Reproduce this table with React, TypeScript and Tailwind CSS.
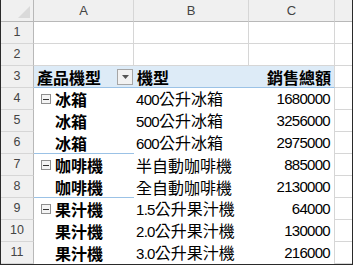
import React from "react";

const CJK = { fontFamily: '"Noto Sans CJK TC", "Noto Sans CJK SC", sans-serif' };
const NUM = { fontFamily: '"Liberation Sans", Arial, sans-serif' };

function Num({ children }: { children: React.ReactNode }) {
  return (
    <span className="text-[15px] tracking-[-0.7px]" style={NUM}>
      {children}
    </span>
  );
}

function MinusBox() {
  return (
    <span className="mr-[4px] inline-flex h-[10px] w-[10px] shrink-0 items-center justify-center border border-[#8f8f8f] bg-[#f4f4f4]">
      <span className="h-[1px] w-[6px] bg-[#333]" />
    </span>
  );
}

type R = {
  n: number;
  icon?: boolean;
  a: string;
  bNum: string;
  bText: string;
  c: string;
  sep?: boolean;
};

const data: R[] = [
  { n: 4, icon: true, a: "冰箱", bNum: "400", bText: "公升冰箱", c: "1680000" },
  { n: 5, a: "冰箱", bNum: "500", bText: "公升冰箱", c: "3256000" },
  { n: 6, a: "冰箱", bNum: "600", bText: "公升冰箱", c: "2975000", sep: true },
  { n: 7, icon: true, a: "咖啡機", bNum: "", bText: "半自動咖啡機", c: "885000" },
  { n: 8, a: "咖啡機", bNum: "", bText: "全自動咖啡機", c: "2130000", sep: true },
  { n: 9, icon: true, a: "果汁機", bNum: "1.5", bText: "公升果汁機", c: "64000" },
  { n: 10, a: "果汁機", bNum: "2.0", bText: "公升果汁機", c: "130000" },
  { n: 11, a: "果汁機", bNum: "3.0", bText: "公升果汁機", c: "216000" },
];

function RowNum({ n }: { n: number }) {
  return (
    <div
      className="flex h-full w-[33px] shrink-0 items-center justify-center border-r border-b border-r-[#b8b8b8] border-b-[#d6d6d6] bg-[#f0f0f0] text-[12.5px] leading-none text-[#444]"
      style={NUM}
    >
      {n}
    </div>
  );
}

export default function App() {
  return (
    <div className="flex h-[265px] w-[353px] flex-col overflow-hidden border-x border-b border-[#2a2a2a] bg-white text-black">
      {/* column headers */}
      <div className="flex h-[22px] shrink-0 text-[13px] leading-none text-[#444]" style={NUM}>
        <div className="relative h-full w-[33px] shrink-0 border-r border-b border-[#b8b8b8] bg-[#f0f0f0]">
          <svg className="absolute right-[3px] bottom-[3px]" width="12" height="12" viewBox="0 0 12 12">
            <polygon points="12,0 12,12 0,12" fill="#dadada" />
          </svg>
        </div>
        <div className="flex h-full w-[100px] shrink-0 items-center justify-center border-r border-b border-r-[#d6d6d6] border-b-[#b8b8b8] bg-[#f0f0f0]">A</div>
        <div className="flex h-full w-[115px] shrink-0 items-center justify-center border-r border-b border-r-[#d6d6d6] border-b-[#b8b8b8] bg-[#f0f0f0]">B</div>
        <div className="flex h-full w-[86px] shrink-0 items-center justify-center border-r border-b border-r-[#d6d6d6] border-b-[#b8b8b8] bg-[#f0f0f0]">C</div>
        <div className="h-full flex-1 border-b border-[#b8b8b8] bg-[#f0f0f0]" />
      </div>

      {/* rows 1, 2 */}
      {[1, 2].map((n) => (
        <div key={n} className="flex h-[22px] shrink-0">
          <RowNum n={n} />
          <div className="h-full w-[100px] shrink-0 border-r border-b border-[#d6d6d6]" />
          <div className="h-full w-[115px] shrink-0 border-r border-b border-[#d6d6d6]" />
          <div className="h-full w-[86px] shrink-0 border-r border-b border-[#d6d6d6]" />
          <div className="h-full flex-1 border-b border-[#d6d6d6]" />
        </div>
      ))}

      {/* row 3 pivot header */}
      <div className="flex h-[22px] shrink-0">
        <RowNum n={3} />
        <div className="flex h-full w-[100px] shrink-0 items-center justify-between border-b border-[#9bc2e6] bg-[#ddebf7] pr-[1px] pl-[3px] text-[16px] leading-[18px] font-bold" style={CJK}>
          <span>產品機型</span>
          <span className="flex h-[16px] w-[16px] items-center justify-center border border-[#a6a6a6] bg-[#f2f2f2]">
            <svg width="7" height="4" viewBox="0 0 7 4">
              <polygon points="0,0 7,0 3.5,4" fill="#555" />
            </svg>
          </span>
        </div>
        <div className="flex h-full w-[115px] shrink-0 items-center border-b border-[#9bc2e6] bg-[#ddebf7] pl-[3px] text-[16px] leading-[18px] font-bold" style={CJK}>
          機型
        </div>
        <div className="flex h-full w-[86px] shrink-0 items-center justify-end border-r border-b border-r-[#d6d6d6] border-b-[#9bc2e6] bg-[#ddebf7] pr-[3px] text-[16px] leading-[18px] font-bold" style={CJK}>
          銷售總額
        </div>
        <div className="h-full flex-1 border-b border-[#d6d6d6]" />
      </div>

      {data.map((r) => (
        <div key={r.n} className="flex h-[22px] shrink-0">
          <RowNum n={r.n} />
          <div
            className={
              "flex h-full w-[100px] shrink-0 items-center pl-[7px] text-[16px] leading-[18px] font-bold " +
              (r.sep ? "border-b border-[#9bc2e6]" : "")
            }
            style={CJK}
          >
            {r.icon ? <MinusBox /> : <span className="mr-[4px] w-[10px] shrink-0" />}
            <span>{r.a}</span>
          </div>
          <div className="flex h-full w-[115px] shrink-0 items-center pl-[2px] text-[16px] leading-[18px]" style={CJK}>
            <span className="whitespace-nowrap">
              {r.bNum && <Num>{r.bNum}</Num>}
              {r.bText}
            </span>
          </div>
          <div className="flex h-full w-[86px] shrink-0 items-center justify-end border-r border-[#d6d6d6] pr-[4px] leading-[18px]">
            <Num>{r.c}</Num>
          </div>
          <div className="h-full flex-1 border-b border-[#d6d6d6]" />
        </div>
      ))}
    </div>
  );
}
